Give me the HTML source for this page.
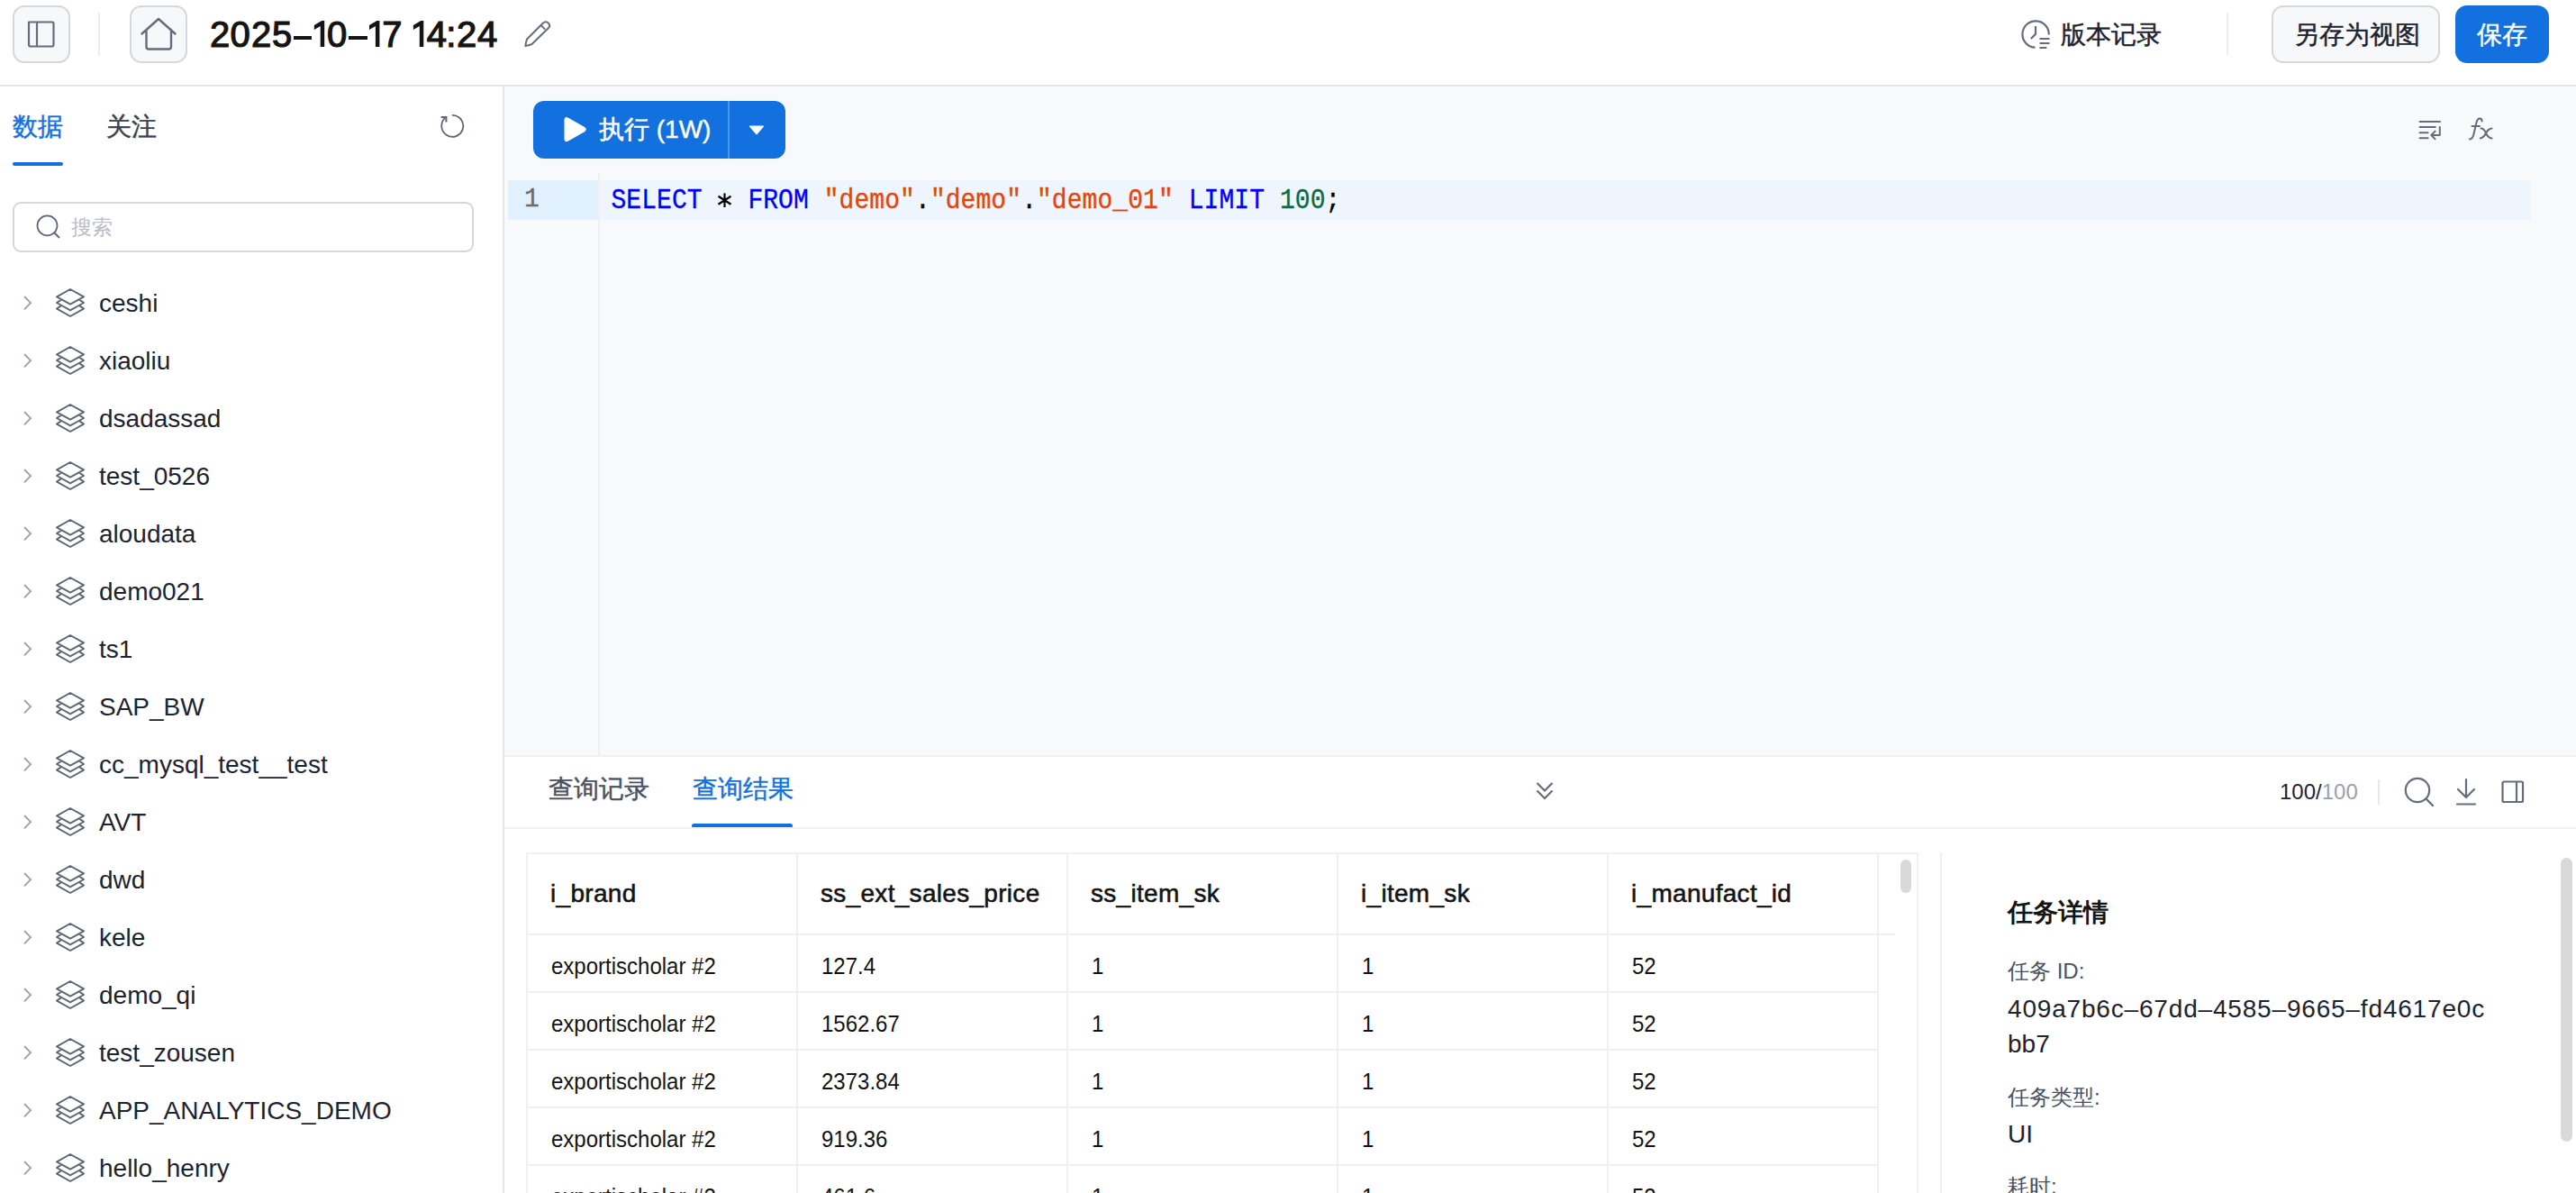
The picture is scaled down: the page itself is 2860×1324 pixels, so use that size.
<!DOCTYPE html>
<html><head><meta charset="utf-8">
<style>
*{box-sizing:border-box;margin:0;padding:0}
html,body{width:2860px;height:1324px;overflow:hidden;background:#fff;font-family:"Liberation Sans",sans-serif;color:#1d2330}
.a{position:absolute}
.t{position:absolute;white-space:nowrap;line-height:1}
svg{position:absolute;overflow:visible}
.ib{position:absolute;width:64px;height:64px;border:2px solid #d3d7de;border-radius:13px;background:#f7f8fa}
.row{position:absolute;left:0;width:558px;height:64px}
.row .chev{left:26px;top:23.5px}
.row .lay{left:62px;top:16px}
.row .nm{left:110px;top:19px;font-size:28px;color:#1d2330}
.ck{-webkit-text-stroke:0.45px currentColor}
.cell{position:absolute;font-size:24px;color:#141414;white-space:nowrap;line-height:1;transform:scaleY(1.06);transform-origin:0 20.3px}
.hcell{position:absolute;font-size:28px;color:#141414;-webkit-text-stroke:0.55px currentColor;letter-spacing:0.3px;white-space:nowrap;line-height:1}
</style></head><body>

<!-- HEADER -->
<div class="a" style="left:0;top:0;width:2860px;height:96px;background:#fff;border-bottom:2px solid #e2e4e8"></div>
<div class="ib" style="left:14px;top:6px"></div>
<svg style="left:0;top:0" width="1" height="1">
  <path d="M33 24.5 H58 Q59.5 24.5 59.5 26 V49.5 Q59.5 51.5 57.5 51.5 H34 Q32 51.5 32 49.5 V24.5 Z M41 24.5 V51.5" fill="none" stroke="#656c7b" stroke-width="2.2" stroke-linejoin="round"/>
</svg>
<div class="a" style="left:109px;top:14px;width:2px;height:48px;background:#eceef1"></div>
<div class="ib" style="left:144px;top:6px"></div>
<svg style="left:0;top:0" width="1" height="1">
  <path d="M157.5 37.5 L176 21 L194.5 37.5 M162.5 33 V52 Q162.5 54.5 165 54.5 H187.5 Q190 54.5 190 52 V33" fill="none" stroke="#656c7b" stroke-width="2.4" stroke-linecap="round" stroke-linejoin="round"/>
</svg>
<div class="a" style="left:0;top:0;font-size:40px;color:#141414;-webkit-text-stroke:1.2px #141414"><span class="t" style="left:232.9px;top:17.5px">2</span><span class="t" style="left:255.4px;top:17.5px">0</span><span class="t" style="left:279.1px;top:17.5px">2</span><span class="t" style="left:301.9px;top:17.5px">5</span><span class="t" style="left:363px;top:17.5px">0</span><span class="t" style="left:424.3px;top:17.5px">7</span><span class="t" style="left:473.8px;top:17.5px">4</span><span class="t" style="left:495.2px;top:17.5px">:</span><span class="t" style="left:507.1px;top:17.5px">2</span><span class="t" style="left:529.9px;top:17.5px">4</span><svg style="left:0;top:0" width="1" height="1"><path transform="translate(348.8 22.9)" d="M0 5.2 L8.4 0 H11.4 V29.1 H6.9 V6.2 L0 10 Z" fill="#141414"/><path transform="translate(410 22.9)" d="M0 5.2 L8.4 0 H11.4 V29.1 H6.9 V6.2 L0 10 Z" fill="#141414"/><path transform="translate(458.9 22.9)" d="M0 5.2 L8.4 0 H11.4 V29.1 H6.9 V6.2 L0 10 Z" fill="#141414"/></svg><div class="a" style="left:326.4px;top:39.7px;width:19.4px;height:3.9px;background:#141414"></div><div class="a" style="left:387.3px;top:39.7px;width:20.5px;height:3.9px;background:#141414"></div></div>
<svg style="left:0;top:0" width="1" height="1">
  <path d="M585 43.5 L603 25.5 Q606 22.8 609 25.8 Q611.5 28.8 608.8 31.2 L590.5 49 Q587 50.6 583.4 51 Q583.8 47 585 43.5 Z M601.3 28.6 L605.2 32.6" fill="none" stroke="#656c7b" stroke-width="2" stroke-linejoin="round"/>
</svg>

<svg style="left:0;top:0" width="1" height="1">
  <path d="M2259.5 52.7 A14.7 14.7 0 1 1 2274.8 38.5" fill="none" stroke="#656c7b" stroke-width="2.2"/>
  <path d="M2260 29 V37.8 L2254.8 43" fill="none" stroke="#656c7b" stroke-width="2.2"/>
  <path d="M2264.5 43 H2275.5 M2264.5 48 H2275.5 M2264.5 53 H2272.3" fill="none" stroke="#656c7b" stroke-width="2.2"/>
</svg>
<div class="t ck" style="left:2288px;top:25px;font-size:28px;color:#1d2330">版本记录</div>
<div class="a" style="left:2472px;top:14px;width:2px;height:47px;background:#eceef1"></div>
<div class="a" style="left:2522px;top:6px;width:187px;height:64px;border:2px solid #d3d7de;border-radius:13px;background:#f7f8fa"></div>
<div class="t ck" style="left:2547px;top:25px;font-size:28px;color:#1d2330">另存为视图</div>
<div class="a" style="left:2726px;top:6px;width:104px;height:64px;border-radius:13px;background:#1371df"></div>
<div class="t ck" style="left:2750px;top:25px;font-size:28px;color:#fff">保存</div>

<!-- SIDEBAR -->
<div class="a" style="left:558px;top:96px;width:2px;height:1228px;background:#e5e5e5"></div>
<div class="t ck" style="left:14px;top:127px;font-size:28px;color:#1371df">数据</div>
<div class="t ck" style="left:118px;top:127px;font-size:28px;color:#3b4250">关注</div>
<div class="a" style="left:14px;top:180px;width:56px;height:4px;border-radius:2px;background:#1371df"></div>
<svg style="left:0;top:0" width="1" height="1">
  <path d="M501.8 127.8 A12 12 0 1 1 494.8 130.4" fill="none" stroke="#5f6675" stroke-width="1.8"/>
  <path d="M489.6 130 H495.4 V135.5" fill="none" stroke="#5f6675" stroke-width="2"/>
</svg>
<div class="a" style="left:14px;top:224px;width:512px;height:56px;border:2px solid #d3d7de;border-radius:9px;background:#fff"></div>
<svg style="left:0;top:0" width="1" height="1">
  <circle cx="52.5" cy="250.4" r="11" fill="none" stroke="#5f6675" stroke-width="1.8"/>
  <path d="M60.5 258.5 L66 264" fill="none" stroke="#5f6675" stroke-width="2"/>
</svg>
<div class="t" style="left:79px;top:240.5px;font-size:23px;color:#b9bdc5">搜索</div>

<div id="tree">
<div class="row" style="top:304px"><svg class="chev" width="10" height="18"><path d="M1 1 L8 8.2 L1 15.4" fill="none" stroke="#9aa1ad" stroke-width="1.8"/></svg><svg class="lay" width="32" height="32"><path d="M16 1 L31 9.4 L16 17.6 L1 9.4 Z M6 12.6 L1 16 L16 24.3 L31 16 L26 12.6 M6 19.2 L1 22.6 L16 31 L31 22.6 L26 19.2" fill="none" stroke="#5f6675" stroke-width="2" stroke-linejoin="round"/></svg><div class="t nm">ceshi</div></div>
<div class="row" style="top:368px"><svg class="chev" width="10" height="18"><path d="M1 1 L8 8.2 L1 15.4" fill="none" stroke="#9aa1ad" stroke-width="1.8"/></svg><svg class="lay" width="32" height="32"><path d="M16 1 L31 9.4 L16 17.6 L1 9.4 Z M6 12.6 L1 16 L16 24.3 L31 16 L26 12.6 M6 19.2 L1 22.6 L16 31 L31 22.6 L26 19.2" fill="none" stroke="#5f6675" stroke-width="2" stroke-linejoin="round"/></svg><div class="t nm">xiaoliu</div></div>
<div class="row" style="top:432px"><svg class="chev" width="10" height="18"><path d="M1 1 L8 8.2 L1 15.4" fill="none" stroke="#9aa1ad" stroke-width="1.8"/></svg><svg class="lay" width="32" height="32"><path d="M16 1 L31 9.4 L16 17.6 L1 9.4 Z M6 12.6 L1 16 L16 24.3 L31 16 L26 12.6 M6 19.2 L1 22.6 L16 31 L31 22.6 L26 19.2" fill="none" stroke="#5f6675" stroke-width="2" stroke-linejoin="round"/></svg><div class="t nm">dsadassad</div></div>
<div class="row" style="top:496px"><svg class="chev" width="10" height="18"><path d="M1 1 L8 8.2 L1 15.4" fill="none" stroke="#9aa1ad" stroke-width="1.8"/></svg><svg class="lay" width="32" height="32"><path d="M16 1 L31 9.4 L16 17.6 L1 9.4 Z M6 12.6 L1 16 L16 24.3 L31 16 L26 12.6 M6 19.2 L1 22.6 L16 31 L31 22.6 L26 19.2" fill="none" stroke="#5f6675" stroke-width="2" stroke-linejoin="round"/></svg><div class="t nm">test_0526</div></div>
<div class="row" style="top:560px"><svg class="chev" width="10" height="18"><path d="M1 1 L8 8.2 L1 15.4" fill="none" stroke="#9aa1ad" stroke-width="1.8"/></svg><svg class="lay" width="32" height="32"><path d="M16 1 L31 9.4 L16 17.6 L1 9.4 Z M6 12.6 L1 16 L16 24.3 L31 16 L26 12.6 M6 19.2 L1 22.6 L16 31 L31 22.6 L26 19.2" fill="none" stroke="#5f6675" stroke-width="2" stroke-linejoin="round"/></svg><div class="t nm">aloudata</div></div>
<div class="row" style="top:624px"><svg class="chev" width="10" height="18"><path d="M1 1 L8 8.2 L1 15.4" fill="none" stroke="#9aa1ad" stroke-width="1.8"/></svg><svg class="lay" width="32" height="32"><path d="M16 1 L31 9.4 L16 17.6 L1 9.4 Z M6 12.6 L1 16 L16 24.3 L31 16 L26 12.6 M6 19.2 L1 22.6 L16 31 L31 22.6 L26 19.2" fill="none" stroke="#5f6675" stroke-width="2" stroke-linejoin="round"/></svg><div class="t nm">demo021</div></div>
<div class="row" style="top:688px"><svg class="chev" width="10" height="18"><path d="M1 1 L8 8.2 L1 15.4" fill="none" stroke="#9aa1ad" stroke-width="1.8"/></svg><svg class="lay" width="32" height="32"><path d="M16 1 L31 9.4 L16 17.6 L1 9.4 Z M6 12.6 L1 16 L16 24.3 L31 16 L26 12.6 M6 19.2 L1 22.6 L16 31 L31 22.6 L26 19.2" fill="none" stroke="#5f6675" stroke-width="2" stroke-linejoin="round"/></svg><div class="t nm">ts1</div></div>
<div class="row" style="top:752px"><svg class="chev" width="10" height="18"><path d="M1 1 L8 8.2 L1 15.4" fill="none" stroke="#9aa1ad" stroke-width="1.8"/></svg><svg class="lay" width="32" height="32"><path d="M16 1 L31 9.4 L16 17.6 L1 9.4 Z M6 12.6 L1 16 L16 24.3 L31 16 L26 12.6 M6 19.2 L1 22.6 L16 31 L31 22.6 L26 19.2" fill="none" stroke="#5f6675" stroke-width="2" stroke-linejoin="round"/></svg><div class="t nm">SAP_BW</div></div>
<div class="row" style="top:816px"><svg class="chev" width="10" height="18"><path d="M1 1 L8 8.2 L1 15.4" fill="none" stroke="#9aa1ad" stroke-width="1.8"/></svg><svg class="lay" width="32" height="32"><path d="M16 1 L31 9.4 L16 17.6 L1 9.4 Z M6 12.6 L1 16 L16 24.3 L31 16 L26 12.6 M6 19.2 L1 22.6 L16 31 L31 22.6 L26 19.2" fill="none" stroke="#5f6675" stroke-width="2" stroke-linejoin="round"/></svg><div class="t nm">cc_mysql_test__test</div></div>
<div class="row" style="top:880px"><svg class="chev" width="10" height="18"><path d="M1 1 L8 8.2 L1 15.4" fill="none" stroke="#9aa1ad" stroke-width="1.8"/></svg><svg class="lay" width="32" height="32"><path d="M16 1 L31 9.4 L16 17.6 L1 9.4 Z M6 12.6 L1 16 L16 24.3 L31 16 L26 12.6 M6 19.2 L1 22.6 L16 31 L31 22.6 L26 19.2" fill="none" stroke="#5f6675" stroke-width="2" stroke-linejoin="round"/></svg><div class="t nm">AVT</div></div>
<div class="row" style="top:944px"><svg class="chev" width="10" height="18"><path d="M1 1 L8 8.2 L1 15.4" fill="none" stroke="#9aa1ad" stroke-width="1.8"/></svg><svg class="lay" width="32" height="32"><path d="M16 1 L31 9.4 L16 17.6 L1 9.4 Z M6 12.6 L1 16 L16 24.3 L31 16 L26 12.6 M6 19.2 L1 22.6 L16 31 L31 22.6 L26 19.2" fill="none" stroke="#5f6675" stroke-width="2" stroke-linejoin="round"/></svg><div class="t nm">dwd</div></div>
<div class="row" style="top:1008px"><svg class="chev" width="10" height="18"><path d="M1 1 L8 8.2 L1 15.4" fill="none" stroke="#9aa1ad" stroke-width="1.8"/></svg><svg class="lay" width="32" height="32"><path d="M16 1 L31 9.4 L16 17.6 L1 9.4 Z M6 12.6 L1 16 L16 24.3 L31 16 L26 12.6 M6 19.2 L1 22.6 L16 31 L31 22.6 L26 19.2" fill="none" stroke="#5f6675" stroke-width="2" stroke-linejoin="round"/></svg><div class="t nm">kele</div></div>
<div class="row" style="top:1072px"><svg class="chev" width="10" height="18"><path d="M1 1 L8 8.2 L1 15.4" fill="none" stroke="#9aa1ad" stroke-width="1.8"/></svg><svg class="lay" width="32" height="32"><path d="M16 1 L31 9.4 L16 17.6 L1 9.4 Z M6 12.6 L1 16 L16 24.3 L31 16 L26 12.6 M6 19.2 L1 22.6 L16 31 L31 22.6 L26 19.2" fill="none" stroke="#5f6675" stroke-width="2" stroke-linejoin="round"/></svg><div class="t nm">demo_qi</div></div>
<div class="row" style="top:1136px"><svg class="chev" width="10" height="18"><path d="M1 1 L8 8.2 L1 15.4" fill="none" stroke="#9aa1ad" stroke-width="1.8"/></svg><svg class="lay" width="32" height="32"><path d="M16 1 L31 9.4 L16 17.6 L1 9.4 Z M6 12.6 L1 16 L16 24.3 L31 16 L26 12.6 M6 19.2 L1 22.6 L16 31 L31 22.6 L26 19.2" fill="none" stroke="#5f6675" stroke-width="2" stroke-linejoin="round"/></svg><div class="t nm">test_zousen</div></div>
<div class="row" style="top:1200px"><svg class="chev" width="10" height="18"><path d="M1 1 L8 8.2 L1 15.4" fill="none" stroke="#9aa1ad" stroke-width="1.8"/></svg><svg class="lay" width="32" height="32"><path d="M16 1 L31 9.4 L16 17.6 L1 9.4 Z M6 12.6 L1 16 L16 24.3 L31 16 L26 12.6 M6 19.2 L1 22.6 L16 31 L31 22.6 L26 19.2" fill="none" stroke="#5f6675" stroke-width="2" stroke-linejoin="round"/></svg><div class="t nm">APP_ANALYTICS_DEMO</div></div>
<div class="row" style="top:1264px"><svg class="chev" width="10" height="18"><path d="M1 1 L8 8.2 L1 15.4" fill="none" stroke="#9aa1ad" stroke-width="1.8"/></svg><svg class="lay" width="32" height="32"><path d="M16 1 L31 9.4 L16 17.6 L1 9.4 Z M6 12.6 L1 16 L16 24.3 L31 16 L26 12.6 M6 19.2 L1 22.6 L16 31 L31 22.6 L26 19.2" fill="none" stroke="#5f6675" stroke-width="2" stroke-linejoin="round"/></svg><div class="t nm">hello_henry</div></div>
</div>

<!-- EDITOR -->
<div class="a" style="left:560px;top:96px;width:2300px;height:742px;background:#f8f9fb"></div>
<div class="a" style="left:592px;top:112px;width:280px;height:64px;border-radius:12px;background:#1371df"></div>
<div class="a" style="left:808px;top:112px;width:2px;height:64px;background:#4a97f0"></div>
<svg style="left:0;top:0" width="1" height="1">
  <path d="M627.5 133 Q627.5 130 630.5 131.6 L648.5 141.8 Q651 143.6 648.5 145.4 L630.5 155.6 Q627.5 157.2 627.5 154.2 Z" fill="#fff" stroke="#fff" stroke-width="2" stroke-linejoin="round"/>
  <path d="M832.8 140.2 H847.2 L840 148.6 Z" fill="#fff" stroke="#fff" stroke-width="1.6" stroke-linejoin="round"/>
</svg>
<div class="t ck" style="left:665px;top:130px;font-size:28px;color:#fff">执行 (1W)</div>
<svg style="left:0;top:0" width="1" height="1">
  <path d="M2686.5 135 H2709 M2686.5 141 H2703.8 M2686.5 147.2 H2695.6 M2686.5 153.3 H2695.6 M2708.8 141 V150 H2699.5 M2703.6 145.6 L2699.3 150 L2703.6 154.4" fill="none" stroke="#656c7b" stroke-width="2" stroke-linecap="round" stroke-linejoin="round"/>
  <path d="M2742 154.5 Q2745.3 154.3 2746.4 149 L2749.6 135.5 Q2750.6 131.6 2753.2 131.6 Q2755.6 131.8 2755.6 134.5 M2744.5 140 H2753 M2754.5 142.6 Q2757.6 142.3 2760 147.8 Q2762.6 153.3 2766.5 153.6 M2766.5 142.4 Q2762.3 143 2760 147.8 Q2757.6 152.8 2753.8 153.4" fill="none" stroke="#656c7b" stroke-width="2" stroke-linecap="round" stroke-linejoin="round"/>
</svg>
<div class="a" style="left:564px;top:200px;width:100px;height:44px;background:#e1f0fd"></div>
<div class="a" style="left:666px;top:200px;width:2144px;height:44px;background:#eef5fc"></div>
<div class="a" style="left:664px;top:192px;width:2px;height:647px;background:#f1eeee"></div>
<div class="t" style="left:582px;top:207.5px;font-size:28px;font-family:'Liberation Mono',monospace;color:#6b6b6b;-webkit-text-stroke:0.3px currentColor;transform:scaleY(1.08);transform-origin:0 21.5px">1</div>
<div class="t" style="left:678.5px;top:209.5px;white-space:pre;font-size:28px;font-family:'Liberation Mono',monospace;letter-spacing:0.07px;color:#000;-webkit-text-stroke:0.3px currentColor;transform:scaleY(1.1);transform-origin:0 21.5px"><span style="color:#0000ff">SELECT</span>   <span style="color:#0000ff">FROM</span> <span style="color:#e4450d">"demo"</span>.<span style="color:#e4450d">"demo"</span>.<span style="color:#e4450d">"demo_01"</span> <span style="color:#0000ff">LIMIT</span> <span style="color:#0b6b45">100</span>;</div>
<svg style="left:0;top:0" width="1" height="1"><path d="M804.5 214.5 V230 M797.5 217.8 L811.5 226.7 M811.5 217.8 L797.5 226.7" fill="none" stroke="#000" stroke-width="2.2"/></svg>
<div class="a" style="left:560px;top:838px;width:2300px;height:2px;background:#f1f1f1"></div>

<!-- RESULTS -->
<div class="t ck" style="left:609px;top:862px;font-size:28px;color:#4a5261">查询记录</div>
<div class="t ck" style="left:769px;top:862px;font-size:28px;color:#1371df">查询结果</div>
<div class="a" style="left:768px;top:914px;width:112px;height:5px;border-radius:3px;background:#1371df"></div>
<div class="a" style="left:560px;top:918px;width:2300px;height:2px;background:#f1f1f1"></div>
<svg style="left:0;top:0" width="1" height="1">
  <path d="M1706.5 869 L1715 877.5 L1723.5 869 M1706.5 877.5 L1715 886 L1723.5 877.5" fill="none" stroke="#656c7b" stroke-width="2.2"/>
</svg>
<div class="t" style="left:2531px;top:867px;font-size:24px;color:#1d2330">100/<span style="color:#9aa1ad">100</span></div>
<div class="a" style="left:2640px;top:865px;width:2px;height:28px;background:#e6e8ec"></div>
<svg style="left:0;top:0" width="1" height="1">
  <circle cx="2684" cy="877" r="13.2" fill="none" stroke="#656c7b" stroke-width="2.2"/>
  <path d="M2694 887 L2701 894" fill="none" stroke="#656c7b" stroke-width="2.4" stroke-linecap="round"/>
  <path d="M2738 865 V885 M2729 876 L2738 885 L2747 876 M2728 892.5 H2748" fill="none" stroke="#656c7b" stroke-width="2.2" stroke-linecap="round"/>
  <path d="M2780 867.5 H2799.5 Q2801 867.5 2801 869 V888.5 Q2801 890 2799.5 890 H2780 Q2778.5 890 2778.5 888.5 V869 Q2778.5 867.5 2780 867.5 Z M2794 867.5 V890" fill="none" stroke="#656c7b" stroke-width="2.2"/>
</svg>
<div class="a" style="left:584px;top:946px;width:1546px;height:378px;border:2px solid #f0f0f0;border-bottom:none"></div>
<div class="a" style="left:884px;top:948px;width:2px;height:376px;background:#f0f0f0"></div>
<div class="a" style="left:1184px;top:948px;width:2px;height:376px;background:#f0f0f0"></div>
<div class="a" style="left:1484px;top:948px;width:2px;height:376px;background:#f0f0f0"></div>
<div class="a" style="left:1784px;top:948px;width:2px;height:376px;background:#f0f0f0"></div>
<div class="a" style="left:2084px;top:948px;width:2px;height:376px;background:#f0f0f0"></div>
<div class="a" style="left:586px;top:1036px;width:1518px;height:2px;background:#f0f0f0"></div>
<div class="a" style="left:586px;top:1100px;width:1499px;height:2px;background:#f0f0f0"></div>
<div class="a" style="left:586px;top:1164px;width:1499px;height:2px;background:#f0f0f0"></div>
<div class="a" style="left:586px;top:1228px;width:1499px;height:2px;background:#f0f0f0"></div>
<div class="a" style="left:586px;top:1292px;width:1499px;height:2px;background:#f0f0f0"></div>
<div class="a" style="left:2110px;top:954px;width:12px;height:37px;border-radius:6px;background:#d9d9d9"></div>
<div class="hcell" style="left:611px;top:978px">i_brand</div>
<div class="hcell" style="left:911px;top:978px">ss_ext_sales_price</div>
<div class="hcell" style="left:1211px;top:978px">ss_item_sk</div>
<div class="hcell" style="left:1511px;top:978px">i_item_sk</div>
<div class="hcell" style="left:1811px;top:978px">i_manufact_id</div>
<div class="cell" style="left:612px;top:1061px">exportischolar #2</div>
<div class="cell" style="left:912px;top:1061px">127.4</div>
<div class="cell" style="left:1212px;top:1061px">1</div>
<div class="cell" style="left:1512px;top:1061px">1</div>
<div class="cell" style="left:1812px;top:1061px">52</div>
<div class="cell" style="left:612px;top:1125px">exportischolar #2</div>
<div class="cell" style="left:912px;top:1125px">1562.67</div>
<div class="cell" style="left:1212px;top:1125px">1</div>
<div class="cell" style="left:1512px;top:1125px">1</div>
<div class="cell" style="left:1812px;top:1125px">52</div>
<div class="cell" style="left:612px;top:1189px">exportischolar #2</div>
<div class="cell" style="left:912px;top:1189px">2373.84</div>
<div class="cell" style="left:1212px;top:1189px">1</div>
<div class="cell" style="left:1512px;top:1189px">1</div>
<div class="cell" style="left:1812px;top:1189px">52</div>
<div class="cell" style="left:612px;top:1253px">exportischolar #2</div>
<div class="cell" style="left:912px;top:1253px">919.36</div>
<div class="cell" style="left:1212px;top:1253px">1</div>
<div class="cell" style="left:1512px;top:1253px">1</div>
<div class="cell" style="left:1812px;top:1253px">52</div>
<div class="cell" style="left:612px;top:1317px">exportischolar #2</div>
<div class="cell" style="left:912px;top:1317px">461.6</div>
<div class="cell" style="left:1212px;top:1317px">1</div>
<div class="cell" style="left:1512px;top:1317px">1</div>
<div class="cell" style="left:1812px;top:1317px">52</div>
<div class="a" style="left:2154px;top:946px;width:2px;height:378px;background:#f0f0f0"></div>
<div class="t" style="left:2229px;top:999px;font-size:28px;font-weight:bold;color:#141414">任务详情</div>
<div class="t" style="left:2229px;top:1066px;font-size:24px;color:#4a5261">任务 ID:</div>
<div class="t" style="left:2229px;top:1106px;font-size:28px;letter-spacing:0.82px;color:#1d2330">409a7b6c–67dd–4585–9665–fd4617e0c</div>
<div class="t" style="left:2229px;top:1145px;font-size:28px;color:#1d2330">bb7</div>
<div class="t" style="left:2229px;top:1206px;font-size:24px;color:#4a5261">任务类型:</div>
<div class="t" style="left:2229px;top:1245px;font-size:28px;color:#1d2330">UI</div>
<div class="t" style="left:2229px;top:1305px;font-size:24px;color:#4a5261">耗时:</div>
<div class="a" style="left:2843px;top:952px;width:13px;height:315px;border-radius:6.5px;background:#d9d9d9"></div>

</body></html>
